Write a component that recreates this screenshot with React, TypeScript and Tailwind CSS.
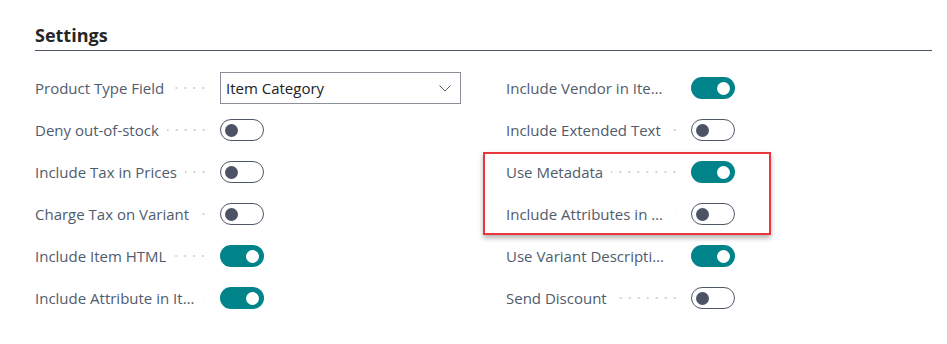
import React from 'react';

interface Field {
    label: string
    kind: 'toggle' | 'select'
    on?: boolean
    value?: string
}

const leftFields: Field[] = [
    { label: 'Product Type Field', kind: 'select', value: 'Item Category' },
    { label: 'Deny out-of-stock', kind: 'toggle', on: false },
    { label: 'Include Tax in Prices', kind: 'toggle', on: false },
    { label: 'Charge Tax on Variant', kind: 'toggle', on: false },
    { label: 'Include Item HTML', kind: 'toggle', on: true },
    { label: 'Include Attribute in Item HTML', kind: 'toggle', on: true },
];

const rightFields: Field[] = [
    { label: 'Include Vendor in Item Description', kind: 'toggle', on: true },
    { label: 'Include Extended Text', kind: 'toggle', on: false },
    { label: 'Use Metadata', kind: 'toggle', on: true },
    { label: 'Include Attributes in Metadata', kind: 'toggle', on: false },
    { label: 'Use Variant Description', kind: 'toggle', on: true },
    { label: 'Send Discount', kind: 'toggle', on: false },
];

const Toggle: React.FC<{ on?: boolean }> = ({ on }) => {
    if (on) {
        return (
            <div className="w-[44px] h-[22px] rounded-full bg-[#008489] flex items-center justify-end pr-[5px]">
                <div className="w-[13px] h-[13px] rounded-full bg-white" />
            </div>
        );
    }
    return (
        <div className="w-[44px] h-[22px] rounded-full border border-[#4f5868] bg-white flex items-center pl-[4px]">
            <div className="w-[13px] h-[13px] rounded-full bg-[#4b5365]" />
        </div>
    );
};

const Select: React.FC<{ value?: string }> = ({ value }) => (
    <div className="w-[241px] h-[32px] border border-[#8a8f98] bg-white flex items-center justify-between pl-[5px] pr-[9px]">
        <span className="text-[15px] text-[#212121]">{value}</span>
        <svg width="12" height="7" viewBox="0 0 12 7" fill="none">
            <path d="M0.5 0.5 L6 6 L11.5 0.5" stroke="#505c6d" strokeWidth="1" />
        </svg>
    </div>
);

const Row: React.FC<{ field: Field }> = ({ field }) => (
    <div className="h-[42px] flex items-center">
        <div className="w-[185px] flex items-center pr-[12px]">
            <span className="max-w-[161px] truncate text-[15px] text-[#505c6d]">{field.label}</span>
            <span className="flex-1 ml-[8px] h-[4px] bg-[radial-gradient(circle,#c9c9c9_0.9px,transparent_1.2px)] bg-[length:9px_4px] bg-repeat-x bg-right" />
        </div>
        {field.kind === 'select' ? <Select value={field.value} /> : <Toggle on={field.on} />}
    </div>
);

const App: React.FC = () => {
    return (
        <div className="w-[947px] h-[344px] bg-white font-['Open_Sans','Noto_Sans',sans-serif] pl-[35px] pr-[15px] pt-[22px] relative">
            <h2 className="text-[18px] font-bold text-[#262626] leading-[26px] pb-[2px] border-b border-[#4a5461]">
                Settings
            </h2>
            <div className="grid grid-cols-[471px_1fr] pt-[16px]">
                <div>
                    {leftFields.map((f) => (
                        <Row key={f.label} field={f} />
                    ))}
                </div>
                <div>
                    {rightFields.map((f) => (
                        <Row key={f.label} field={f} />
                    ))}
                </div>
            </div>
            <div className="absolute left-[483px] top-[152px] w-[288px] h-[83px] border-2 border-[#e8383d] shadow-[0_3px_5px_rgba(0,0,0,0.3)] pointer-events-none" />
        </div>
    );
};

export default App;
